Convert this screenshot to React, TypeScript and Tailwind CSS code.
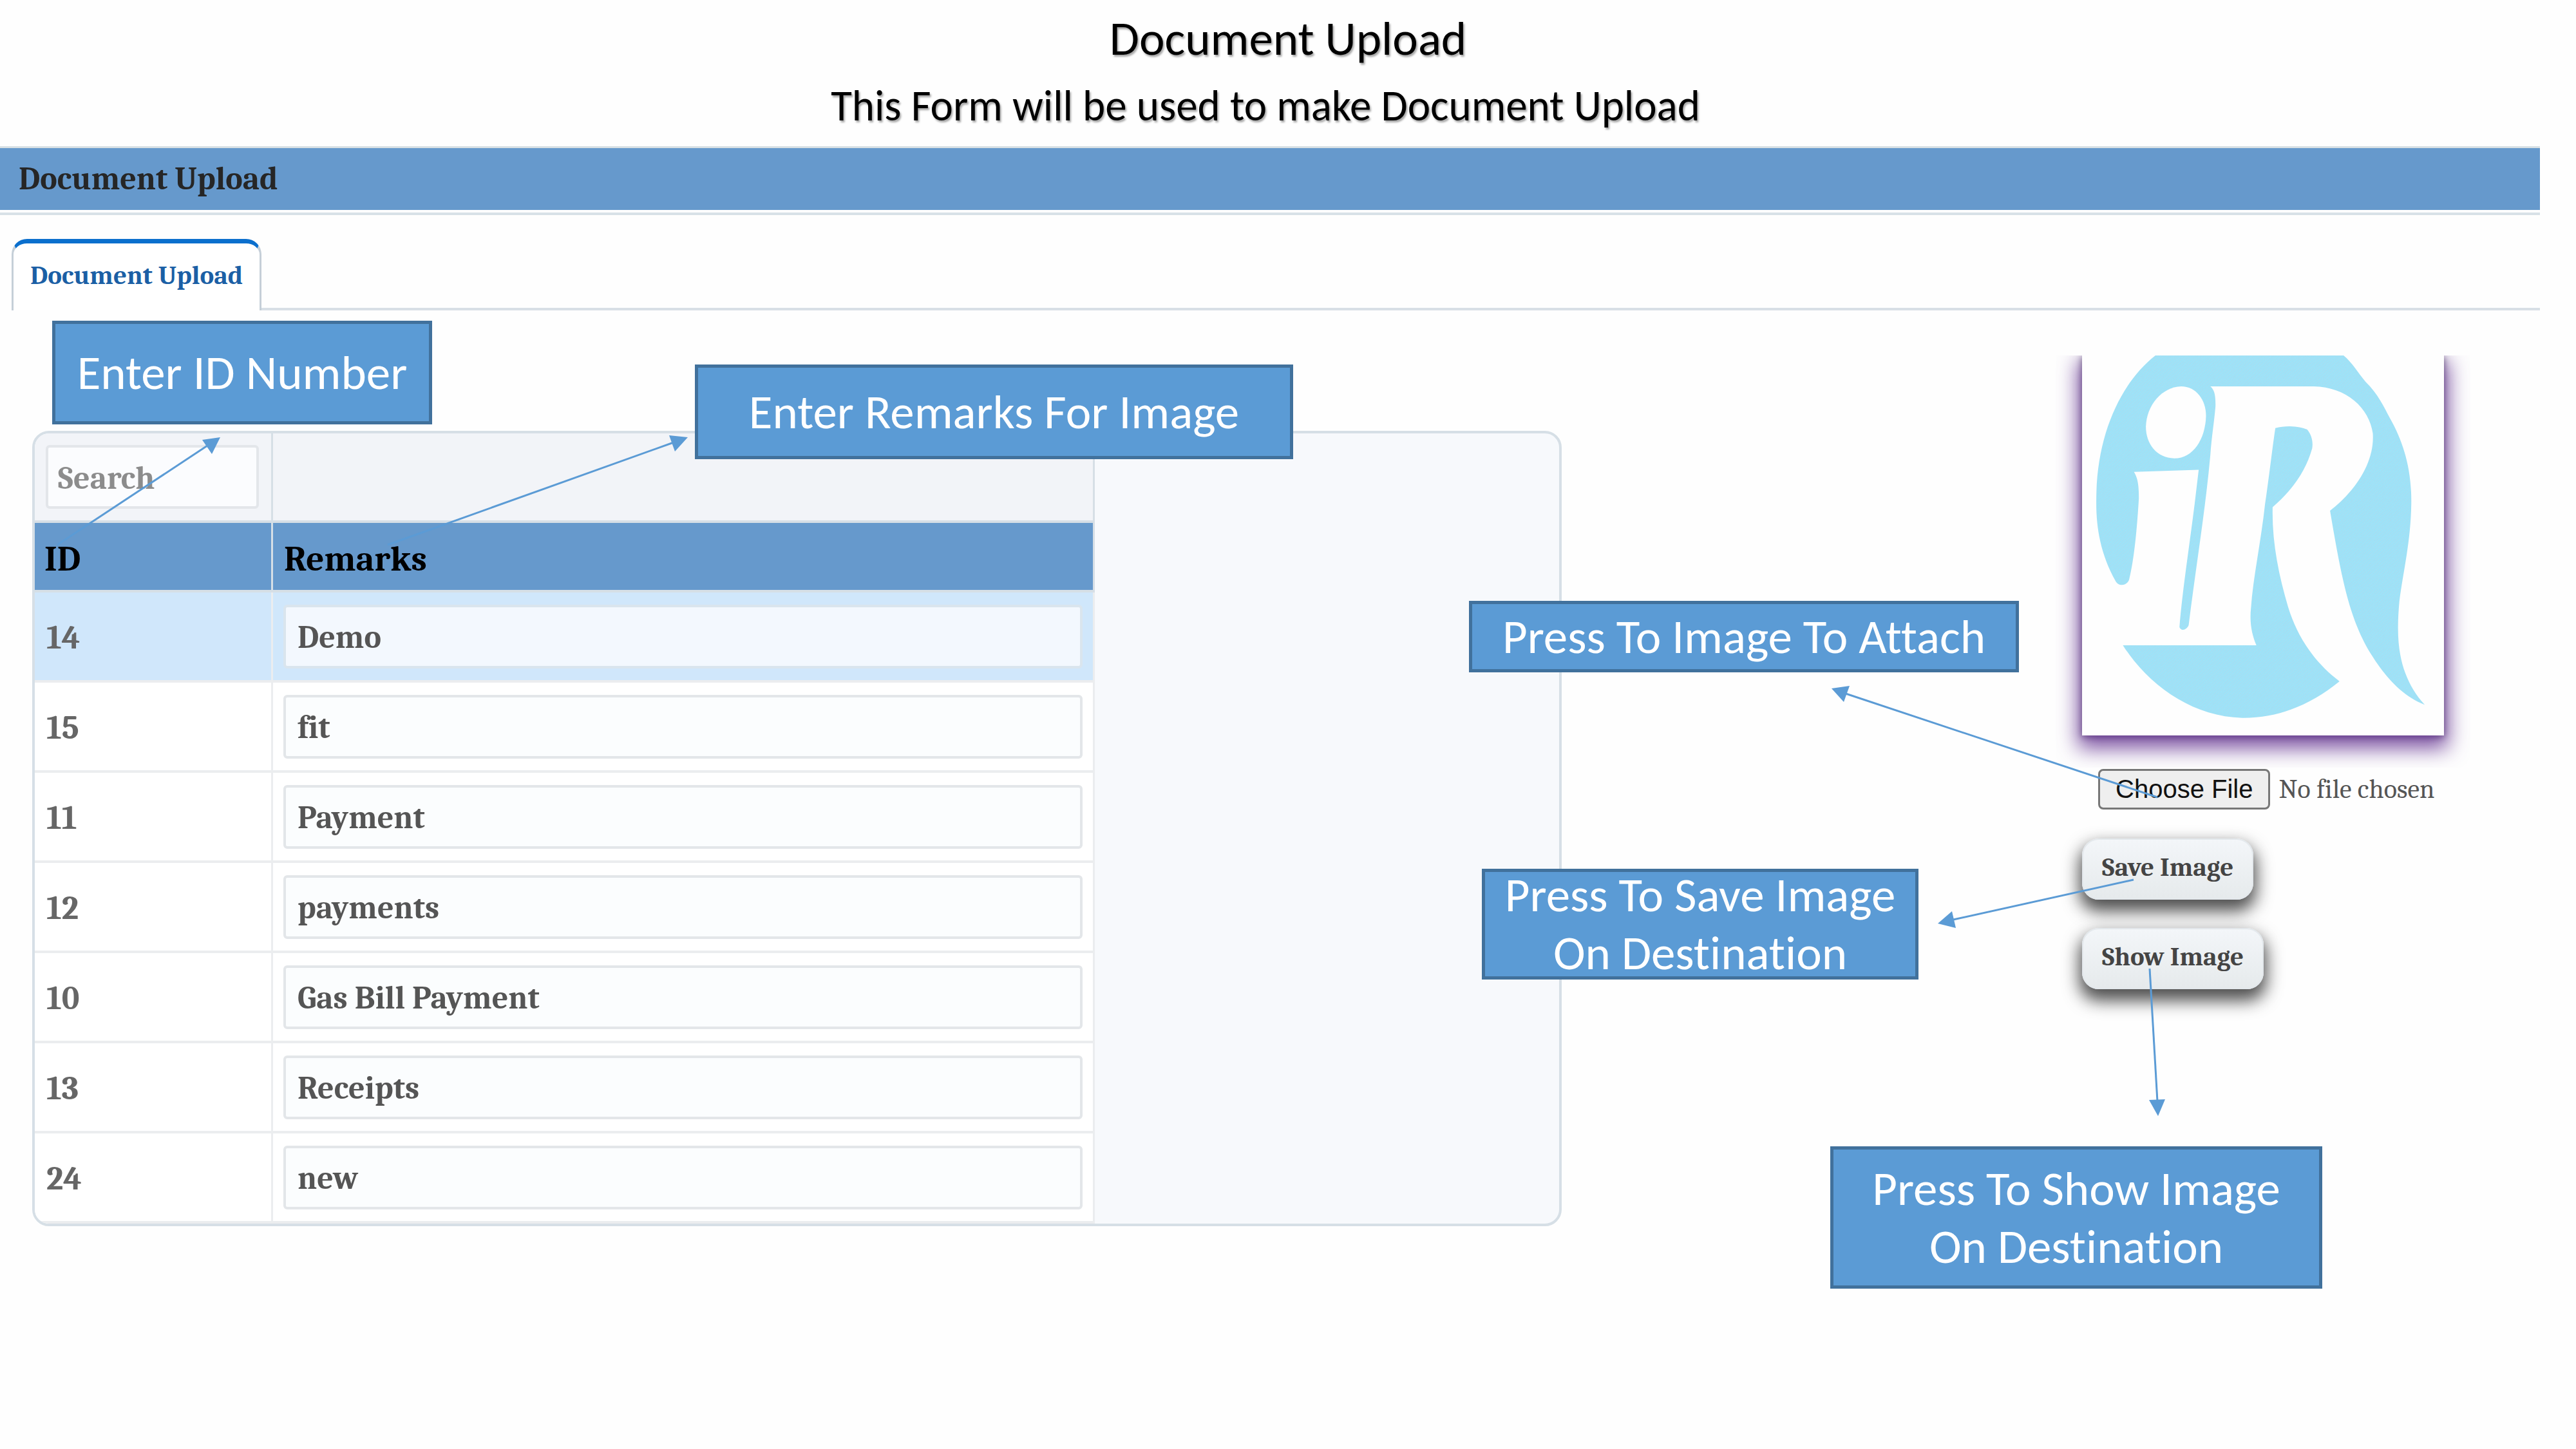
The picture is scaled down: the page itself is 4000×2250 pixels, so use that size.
import type { ReactNode } from "react";

const records = [
  { id: 14, remarks: "Demo" },
  { id: 15, remarks: "fit" },
  { id: 11, remarks: "Payment" },
  { id: 12, remarks: "payments" },
  { id: 10, remarks: "Gas Bill Payment" },
  { id: 13, remarks: "Receipts" },
  { id: 24, remarks: "new" },
];

function Callout({ place, children }: { place: string; children: ReactNode }) {
  return (
    <div
      className={`absolute flex items-center justify-center border-[5px] border-[#41719c] bg-[#5b9bd5] text-center font-['Calibri','Lato',sans-serif] text-[75px] leading-[90px] whitespace-nowrap text-white [font-variant-ligatures:none] ${place}`}
    >
      {children}
    </div>
  );
}

function Arrow({ from, to, head }: { from: [number, number]; to: [number, number]; head: string }) {
  return (
    <g>
      <line x1={from[0]} y1={from[1]} x2={to[0]} y2={to[1]} stroke="#5b9bd5" strokeWidth="3" />
      <polygon points={head} fill="#5b9bd5" />
    </g>
  );
}

function Logo() {
  return (
    <svg viewBox="125 52 1335 1403" className="block h-[590px] w-full" role="img" aria-label="iR logo">
      <defs>
        <pattern id="weave" width="24" height="24" patternUnits="userSpaceOnUse">
          <rect width="24" height="24" fill="#9be4f9" />
          <path d="M0 6 L6 0 M0 18 L18 0 M6 24 L24 6 M18 24 L24 18" stroke="#a6def3" strokeWidth="4" />
        </pattern>
      </defs>
      <rect x="125" y="52" width="1335" height="1403" fill="#fefefe" />
      <path
        fill="url(#weave)"
        d="M395 52 H1090 C1122 78 1145 118 1172 150 C1218 195 1238 240 1262 285 C1310 370 1342 470 1340 600 C1338 740 1310 850 1296 960 C1286 1070 1290 1150 1318 1225 C1335 1268 1355 1305 1390 1342 C1320 1315 1270 1265 1225 1205 C1120 1060 1090 920 1040 625 C1130 555 1205 450 1198 340 C1185 245 1100 168 980 166 H598 C612 178 618 195 617 240 C612 300 603 350 598 420 C580 620 545 830 518 1048 C510 1068 488 1070 484 1055 C495 920 520 760 540 600 L555 474 L316 482 C330 505 334 530 334 580 C328 680 318 800 298 880 C288 905 258 905 248 885 C190 780 175 680 177 580 C178 340 270 150 395 52 Z"
      />
      <path
        fill="url(#weave)"
        d="M838 320 C880 308 930 314 955 325 C972 345 978 370 974 395 C950 480 900 550 828 612 C825 740 850 860 885 980 C915 1080 975 1180 1075 1255 C970 1340 850 1392 715 1390 C530 1385 370 1270 275 1122 H768 C752 1085 742 1040 748 985 C756 870 785 740 800 600 C815 500 826 400 838 320 Z"
      />
      <path
        fill="#fefefe"
        d="M490 166 C545 166 582 215 582 275 C580 360 535 432 465 432 C400 430 360 380 360 315 C362 235 420 168 490 166 Z"
      />
    </svg>
  );
}

const actionButton =
  "h-[95px] rounded-[26px] border-2 border-[#e3e8ec] bg-linear-to-b from-[#f3f6f9] to-[#e6eaec] px-[29px] pb-[6px] text-[41px] leading-[48px] font-bold text-[#444] shadow-[0_14px_26px_4px_rgba(20,20,20,0.75)]";

export default function App() {
  return (
    <div className="relative min-h-screen bg-[#fefefe] pb-[345px] font-['Cambria','Liberation_Serif',serif] text-[#555]">
      <header className="h-[227px] text-center font-['Calibri','Lato',sans-serif] text-black [text-shadow:2px_3px_3px_rgba(0,0,0,0.35)]">
        <h1 className="pt-[15px] text-[75px] leading-[90px]">Document Upload</h1>
        <p className="mt-[14px] pr-[70px] text-[67px] leading-[90px]">This Form will be used to make Document Upload</p>
      </header>

      <div className="mr-[56px]">
        <h2 className="border-t-[3px] border-[#d8e0e4] bg-[#6699cc] pl-[29px] text-[50px] leading-[96px] font-bold text-[#262626]">
          Document Upload
        </h2>
        <div className="mt-[4px] h-[4px] bg-[#d8e1e7]" />

        <nav role="tablist" className="mt-[37px] flex items-stretch">
          <div className="w-[18px]" />
          <button
            type="button"
            role="tab"
            aria-selected="true"
            className="h-[111px] rounded-t-[24px] border-x-[3px] border-t-[7px] border-x-[#c5cfd8] border-t-[#0b6fcd] bg-white px-[26px] pb-[4px] text-[41px] font-bold text-[#1b5fa5]"
          >
            Document Upload
          </button>
          <div className="flex-1 border-b-4 border-[#d8dfe6]" />
        </nav>

        <main className="mt-[70px] flex items-start pl-[50px]">
          <section className="mt-[117px] w-[61%] overflow-hidden rounded-[26px] border-4 border-[#d6dfe6] bg-[#f7f9fc]">
            <table className="w-[1646px] table-fixed border-separate border-spacing-0 text-left">
              <colgroup>
                <col className="w-[370px]" />
                <col />
              </colgroup>
              <thead>
                <tr className="h-[139px] bg-[#f2f4f8]">
                  <td className="border-r-[3px] border-b-4 border-[#d6dfe6] pl-[17px]">
                    <input
                      type="text"
                      aria-label="Search by ID"
                      placeholder="Search"
                      className="block h-[99px] w-[331px] rounded-[6px] border-4 border-[#e3e6ea] bg-[#fbfcfe] px-[15px] pt-[4px] text-[50px] font-bold placeholder:text-[#8c8c8c]"
                    />
                  </td>
                  <td className="border-r-[3px] border-b-4 border-[#d6dfe6]" />
                </tr>
                <tr className="h-[108px] bg-[#6699cc] text-[55px] leading-[60px] text-black">
                  <th scope="col" className="border-r-[3px] border-b-4 border-[#d6dfe6] pt-[8px] pl-[15px]">
                    ID
                  </th>
                  <th scope="col" className="border-r-[3px] border-b-4 border-[#d6dfe6] pt-[8px] pl-[17px]">
                    Remarks
                  </th>
                </tr>
              </thead>
              <tbody>
                {records.map((record, index) => (
                  <tr key={record.id} className={index === 0 ? "h-[140px] bg-[#d0e7fb]" : "h-[140px] bg-white"}>
                    <td className="border-r-[3px] border-b-4 border-[#ebedef] pt-[4px] pl-[18px] text-[52px] font-bold text-[#666]">
                      {record.id}
                    </td>
                    <td className="border-r-[3px] border-b-4 border-[#ebedef] px-[16px]">
                      <input
                        type="text"
                        aria-label={`Remarks for ID ${record.id}`}
                        defaultValue={record.remarks}
                        className={
                          index === 0
                            ? "block h-[99px] w-full rounded-[6px] border-4 border-[#dae5ee] bg-[#f3f8fe] px-[18px] pt-[4px] text-[50px] font-bold text-[#555]"
                            : "block h-[99px] w-full rounded-[6px] border-4 border-[#e3e6e9] bg-[#fbfdfe] px-[18px] pt-[4px] text-[50px] font-bold text-[#555]"
                        }
                      />
                    </td>
                  </tr>
                ))}
              </tbody>
            </table>
          </section>

          <aside className="mr-[108px] ml-auto flex w-[644px] flex-col items-start">
            <div className="w-full overflow-hidden px-[41px] pb-[50px]">
              <div className="shadow-[0_14px_30px_6px_rgba(92,40,140,0.8),0_2px_10px_rgba(20,10,40,0.6)]">
                <Logo />
              </div>
            </div>
            <input
              type="file"
              aria-label="Image file"
              className="mt-[2px] ml-[66px] h-[63px] w-full text-[42px] leading-[57px] text-[#555] file:mr-[13px] file:h-[63px] file:rounded-[8px] file:border-[3px] file:border-solid file:border-[#777] file:bg-[#efefef] file:px-[24px] file:font-['Liberation_Sans',sans-serif] file:text-[40px] file:leading-[57px] file:text-[#111]"
            />
            <div className="mt-[45px] ml-[41px] flex flex-col items-start gap-[44px]">
              <button type="button" className={actionButton}>
                Save Image
              </button>
              <button type="button" className={actionButton}>
                Show Image
              </button>
            </div>
          </aside>
        </main>
      </div>

      <Callout place="left-[81px] top-[498px] h-[161px] w-[590px]">Enter ID Number</Callout>
      <Callout place="left-[1079px] top-[566px] h-[147px] w-[929px]">Enter Remarks For Image</Callout>
      <Callout place="left-[2281px] top-[933px] h-[111px] w-[854px]">Press To Image To Attach</Callout>
      <Callout place="left-[2301px] top-[1349px] h-[172px] w-[678px]">
        Press To Save Image
        <br />
        On Destination
      </Callout>
      <Callout place="left-[2842px] top-[1780px] h-[221px] w-[764px]">
        Press To Show Image
        <br />
        On Destination
      </Callout>

      <svg
        className="pointer-events-none absolute top-0 left-0 h-[2250px] w-[4000px]"
        viewBox="0 0 4000 2250"
        aria-hidden="true"
      >
        <Arrow from={[89, 846]} to={[325, 690]} head="342,679 314,683 329,705" />
        <Arrow from={[602, 846]} to={[1046, 687]} head="1068,679 1039,676 1048,701" />
        <Arrow from={[3350, 1238]} to={[2866, 1077]} head="2844,1069 2872,1065 2863,1090" />
        <Arrow from={[3313, 1366]} to={[3033, 1428]} head="3009,1434 3031,1415 3037,1441" />
        <Arrow from={[3338, 1504]} to={[3350, 1710]} head="3351,1733 3337,1708 3362,1707" />
      </svg>
    </div>
  );
}
